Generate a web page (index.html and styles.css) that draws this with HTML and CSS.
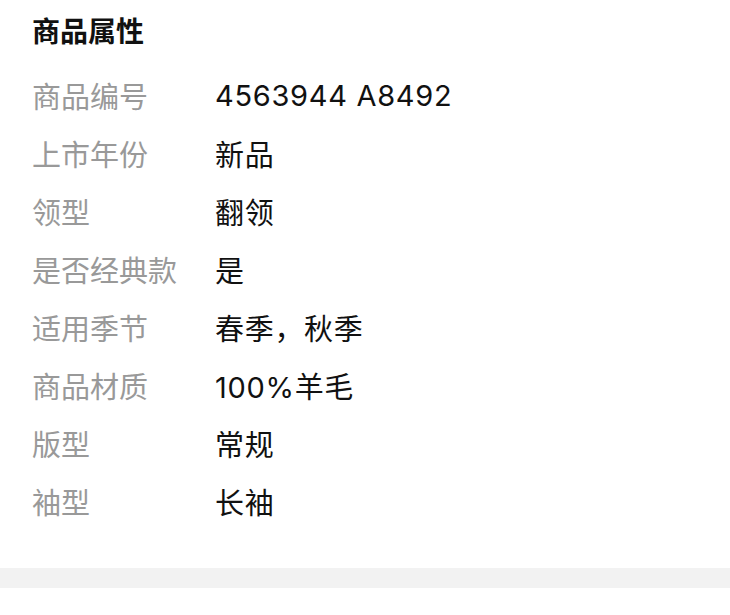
FILE: index.html
```html
<!DOCTYPE html>
<html lang="zh-CN">
<head>
    <meta charset="UTF-8">
    <meta name="viewport" content="width=device-width, initial-scale=1.0">
    <title>商品属性</title>
    <link rel="stylesheet" href="styles.css">
</head>
<body>
    <div class="attrs">
        <h2>商品属性</h2>
        <div class="attr-list">
            <div class="attr-row"><span class="attr-label">商品编号</span><span class="attr-value">4563944 A8492</span></div>
            <div class="attr-row"><span class="attr-label">上市年份</span><span class="attr-value">新品</span></div>
            <div class="attr-row"><span class="attr-label">领型</span><span class="attr-value">翻领</span></div>
            <div class="attr-row"><span class="attr-label">是否经典款</span><span class="attr-value">是</span></div>
            <div class="attr-row"><span class="attr-label">适用季节</span><span class="attr-value">春季，秋季</span></div>
            <div class="attr-row"><span class="attr-label">商品材质</span><span class="attr-value">100%羊毛</span></div>
            <div class="attr-row"><span class="attr-label">版型</span><span class="attr-value">常规</span></div>
            <div class="attr-row"><span class="attr-label">袖型</span><span class="attr-value">长袖</span></div>
        </div>
    </div>
    <div class="divider"></div>
</body>
</html>
```

FILE: styles.css
```css
* {
    margin: 0;
    padding: 0;
    box-sizing: border-box;
    font-family: Inter, 'Noto Sans CJK SC', sans-serif;
}
body {
    background-color: #fff;
    color: #111;
}
.attrs {
    padding: 12px 32px 38px;
}
.attrs h2 {
    font-size: 28px;
    font-weight: bold;
    line-height: 40px;
    margin-bottom: 14px;
}
.attr-row {
    display: flex;
    height: 58px;
    align-items: center;
    font-size: 29px;
}
.attr-label {
    width: 183px;
    flex-shrink: 0;
    color: #999;
}
.attr-value {
    color: #111;
    letter-spacing: 0.7px;
}
.divider {
    height: 20px;
    background-color: #f2f2f2;
}
```
